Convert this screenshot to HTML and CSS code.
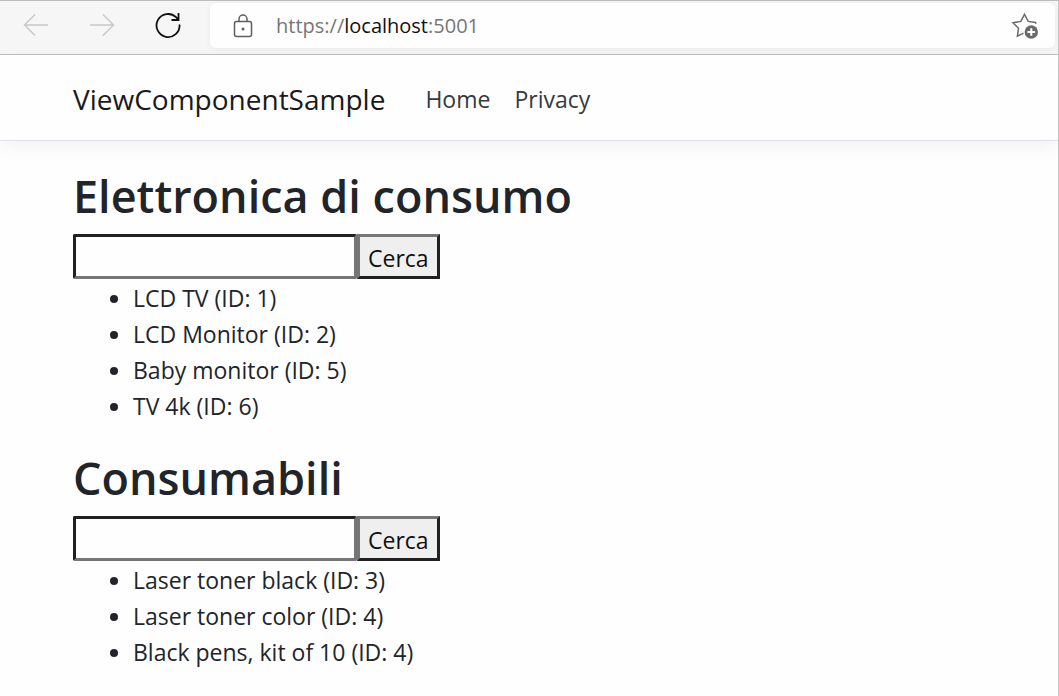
FILE: index.html
```html
<!DOCTYPE html>
<html lang="it">
<head>
<meta charset="utf-8">
<title>ViewComponentSample</title>
<link rel="stylesheet" href="styles.css">
</head>
<body>
<div class="window">
  <div class="toolbar">
    <div class="controls">
      <button class="tool" type="button" aria-label="Back" disabled>
        <svg width="26" height="24" viewBox="0 0 26 24"><path d="M25 12H1.500M12 1.500L1.500 12L12 22.500"/></svg>
      </button>
      <button class="tool" type="button" aria-label="Forward" disabled>
        <svg width="26" height="24" viewBox="0 0 26 24"><path d="M1 12H24.500M14 1.500L24.500 12L14 22.500"/></svg>
      </button>
      <button class="tool reload" type="button" aria-label="Reload">
        <svg width="26" height="26" viewBox="0 0 26 26"><path d="M24.500 12.500A11.500 11.500 0 1 1 21 5.200L23.300 7.500M23.500 1V8H16.500"/></svg>
      </button>
    </div>
    <div class="address">
      <svg class="lock" width="20" height="24" viewBox="0 0 20 24"><rect x="1.500" y="7.500" width="17" height="15" rx="2"/><path d="M6 7.500V5a4 4 0 0 1 8 0V7.500"/><circle class="dot" cx="10" cy="15" r="1.500"/></svg>
      <span class="url">https://<span class="host">localhost</span>:5001</span>
      <button class="favorite" type="button" aria-label="Add to favorites">
        <svg width="28" height="28" viewBox="0 0 28 28"><path d="M25 11.800L24.500 10.500L17.200 9.400L13.500 2.300L9.800 9.400L2 10.700L7.500 16.300L6.400 24.200L12.500 21.200"/><circle class="disc" cx="20.300" cy="20" r="6.700"/><path class="plus" d="M20.300 16.200V23.800M16.500 20H24.100"/></svg>
      </button>
    </div>
  </div>
  <header class="navbar">
    <a class="brand" href="#">ViewComponentSample</a>
    <nav class="links">
      <a href="#">Home</a>
      <a href="#">Privacy</a>
    </nav>
  </header>
  <main class="content">
    <section>
      <h1>Elettronica di consumo</h1>
      <form class="search">
        <input class="field" type="text" aria-label="Cerca in Elettronica di consumo">
        <button class="submit" type="button">Cerca</button>
      </form>
      <ul class="items">
        <li>LCD TV (ID: 1)</li>
        <li>LCD Monitor (ID: 2)</li>
        <li>Baby monitor (ID: 5)</li>
        <li>TV 4k (ID: 6)</li>
      </ul>
    </section>
    <section>
      <h1>Consumabili</h1>
      <form class="search">
        <input class="field" type="text" aria-label="Cerca in Consumabili">
        <button class="submit" type="button">Cerca</button>
      </form>
      <ul class="items">
        <li>Laser toner black (ID: 3)</li>
        <li>Laser toner color (ID: 4)</li>
        <li>Black pens, kit of 10 (ID: 4)</li>
      </ul>
    </section>
  </main>
</div>
</body>
</html>
```
FILE: styles.css
```css
* {
  box-sizing: border-box;
}

body {
  margin: 0;
  background: #fefefe;
  color: #212529;
  font-family: "Segoe UI", "Open Sans", "Noto Sans", sans-serif;
  font-size: 23px;
  line-height: 36px;
}

.window {
  min-height: 100vh;
  border-right: 1px solid #c4c4c4;
}

.toolbar {
  display: flex;
  height: 55px;
  padding: 2px 3px 6px 0;
  border-top: 1px solid #bdbdbd;
  border-bottom: 1px solid #bdbdbd;
  background: #f6f6f6;
}

.controls {
  display: flex;
  flex: none;
  align-items: center;
  gap: 40px;
  width: 210px;
  padding: 0 0 2px 23px;
}

.tool,
.favorite {
  display: flex;
  padding: 0;
  border: 0;
  background: none;
}

svg {
  fill: none;
  stroke: #c8c8c8;
  stroke-width: 1.5;
}

.reload svg {
  stroke: #111;
  stroke-width: 1.8;
}

.address {
  display: flex;
  flex: 1;
  align-items: center;
  padding: 0 16px 0 23px;
  border-radius: 6px;
  background: #fefefe;
  box-shadow: 0 1px 6px rgba(0, 0, 0, 0.05);
}

.lock {
  margin-right: 23px;
  stroke: #5c5e61;
}

.lock .dot {
  fill: #5c5e61;
  stroke: none;
}

.url {
  flex: 1;
  color: #767676;
  font-size: 20px;
}

.host {
  color: #111;
}

.favorite svg {
  stroke: #6a6a6a;
}

.favorite .disc {
  fill: #6a6a6a;
  stroke: none;
}

.favorite .plus {
  stroke: #fefefe;
  stroke-width: 2;
}

.navbar {
  display: flex;
  align-items: center;
  gap: 40px;
  height: 86px;
  padding: 2px 73px 0;
  border-bottom: 1px solid #dee2e6;
  box-shadow: 0 6px 18px rgba(0, 0, 0, 0.05);
}

.navbar a {
  color: #343a40;
  text-decoration: none;
}

.navbar .brand {
  color: #1a1a1a;
  font-size: 28px;
}

.links {
  display: flex;
  gap: 24px;
}

.content {
  padding: 26px 73px 0;
}

h1 {
  margin: 0 0 9px;
  font-size: 45px;
  font-weight: 600;
  line-height: 58px;
}

.search {
  display: flex;
  margin-bottom: 1px;
}

.field,
.submit {
  height: 45px;
  font: inherit;
}

.field {
  width: 284px;
  border: 3px solid;
  border-color: #212121 #767676 #767676 #212121;
  border-radius: 2px;
  background: #fefefe;
}

.submit {
  padding: 2px 8px 0;
  border: 3px solid;
  border-color: #767676 #212121 #212121 #767676;
  background: #efefef;
  color: #111;
}

.items {
  margin: 0 0 25px;
  padding-left: 60px;
}
```
